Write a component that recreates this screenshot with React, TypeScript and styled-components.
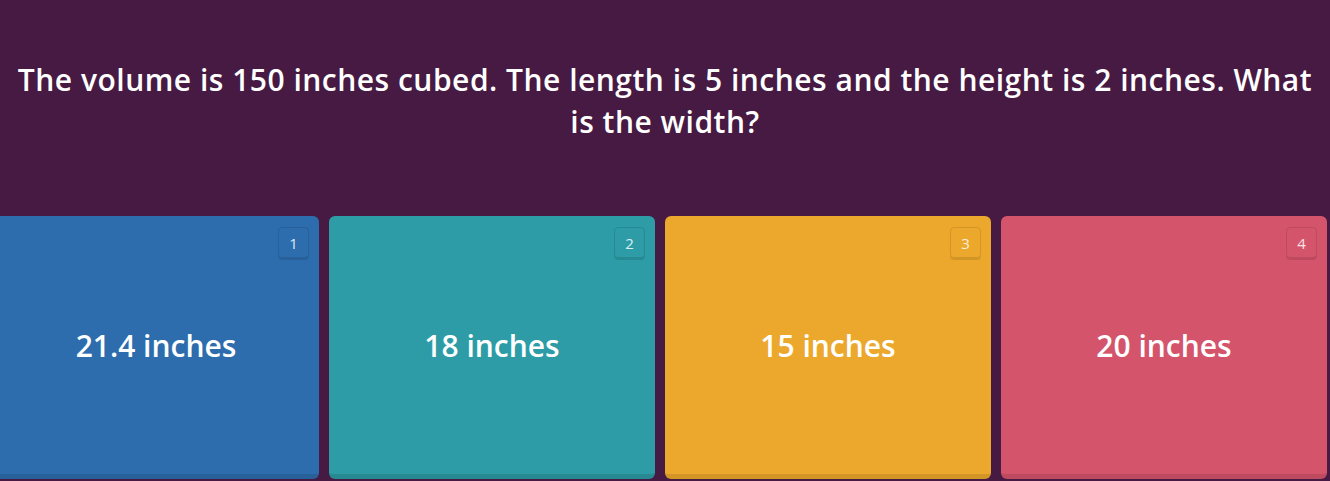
import React from "react";
import styled, { createGlobalStyle } from "styled-components";

const Global = createGlobalStyle`
  html, body { margin: 0; padding: 0; background: #461a42; overflow: hidden; }
  * { box-sizing: border-box; }
`;

const Page = styled.div`
  width: 1330px;
  height: 481px;
  display: flex;
  flex-direction: column;
  background: #461a42;
  font-family: "Open Sans", "Noto Sans", sans-serif;
  overflow: hidden;
`;

const QuestionArea = styled.div`
  height: 216px;
  display: flex;
  align-items: center;
  justify-content: center;
  padding: 0 12px 14px;
`;

const Question = styled.div`
  color: #ffffff;
  font-size: 30px;
  line-height: 42px;
  letter-spacing: 0.5px;
  text-align: center;
  font-weight: 600;
`;

const Options = styled.div`
  display: grid;
  grid-template-columns: repeat(4, 326px);
  gap: 10px;
  margin-left: -7px;
  height: 263px;
`;

type Tone = { face: string; shade: string; badgeText: string };

const Card = styled.div<{ $tone: Tone }>`
  position: relative;
  background: ${(p) => p.$tone.face};
  border-radius: 6px;
  border-bottom: 5px solid ${(p) => p.$tone.shade};
  display: flex;
  align-items: center;
  justify-content: center;
  color: #ffffff;
  font-size: 30px;
  font-weight: 600;
`;

const Badge = styled.div<{ $tone: Tone }>`
  position: absolute;
  top: 11px;
  right: 10px;
  width: 31px;
  height: 31px;
  border-radius: 4px;
  border: 1px solid ${(p) => p.$tone.shade};
  box-shadow: 0 2px 0 ${(p) => p.$tone.shade};
  display: flex;
  align-items: center;
  justify-content: center;
  font-size: 15px;
  color: ${(p) => p.$tone.badgeText};
  font-weight: 400;
`;

const tones: Tone[] = [
  { face: "#2d6cad", shade: "#28609a", badgeText: "#dce8f5" },
  { face: "#2d9ca6", shade: "#278a93", badgeText: "#d9f0f2" },
  { face: "#eca82c", shade: "#d39526", badgeText: "#fcefd6" },
  { face: "#d4546b", shade: "#bd4a5f", badgeText: "#f9e1e6" },
];

const answers = ["21.4 inches", "18 inches", "15 inches", "20 inches"];

export default function App() {
  return (
    <>
      <Global />
      <Page>
        <QuestionArea>
          <Question>
            The volume is 150 inches cubed. The length is 5 inches and the height is 2 inches. What is the width?
          </Question>
        </QuestionArea>
        <Options>
          {answers.map((a, i) => (
            <Card key={a} $tone={tones[i]}>
              <Badge $tone={tones[i]}>{i + 1}</Badge>
              {a}
            </Card>
          ))}
        </Options>
      </Page>
    </>
  );
}
